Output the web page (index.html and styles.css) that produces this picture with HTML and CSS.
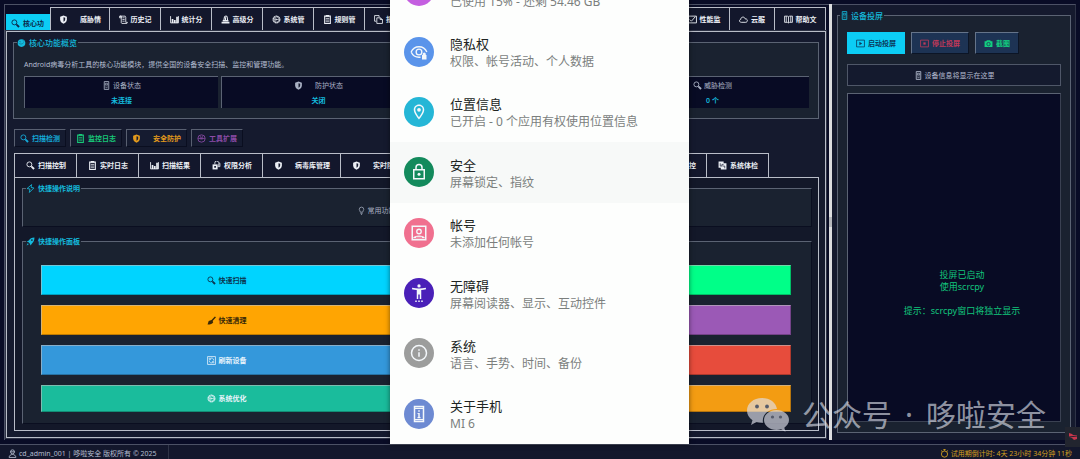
FILE: index.html
```html
<!DOCTYPE html>
<html lang="zh-CN">
<head>
<meta charset="utf-8">
<meta name="viewport" content="width=device-width, initial-scale=1">
<title>核心功能</title>
<link rel="stylesheet" href="styles.css">
</head>
<body>
<svg class="defs" aria-hidden="true">
  <symbol id="search" viewBox="0 0 16 16"><circle cx="6" cy="6" r="4.4" fill="none" stroke="currentColor" stroke-width="1.6"/><path d="M8.500 10.500l2-2 5 4.600-2.400 2.400z" fill="currentColor"/></symbol>
  <symbol id="shield" viewBox="0 0 16 16"><path d="M8 1l6 2v5c0 4-3 6-6 7.500C5 14 2 12 2 8V3z" fill="currentColor"/><path d="M8 4v8c2-1.300 3-2.500 3-4.500V5z" fill="#151a2e"/></symbol>
  <symbol id="scroll" viewBox="0 0 16 16"><path d="M4 14V3L2 2h9l1 2v9h3l-1 2H5zM1 2h3v3H1z" fill="none" stroke="currentColor" stroke-width="1.500"/><path d="M6 5h4M6 8h4M6 11h4" stroke="currentColor" stroke-width="1.400"/></symbol>
  <symbol id="chart" viewBox="0 0 16 16"><path d="M1 2v12h14V2" fill="none" stroke="currentColor" stroke-width="1.600"/><path d="M3 7h3v7H3zM7 9h3v5H7zM11 3h3v11h-3z" fill="currentColor"/></symbol>
  <symbol id="alarm" viewBox="0 0 16 16"><path d="M5 10l1-6c1-3 5-3 5 0l1 6z" fill="none" stroke="currentColor" stroke-width="1.800"/><path d="M1 12h14v3H1zM3 9h10v2H3zM7 4h2v5H7z" fill="currentColor"/></symbol>
  <symbol id="gear" viewBox="0 0 16 16"><circle cx="8" cy="8" r="6" fill="none" stroke="currentColor" stroke-width="2" stroke-dasharray="2.600 .6"/><circle cx="8" cy="8" r="4.500" fill="none" stroke="currentColor"/><path d="M4 8h8M8 8l-2-3M8 8l-2 3" stroke="currentColor" stroke-width="1.200"/></symbol>
  <symbol id="list" viewBox="0 0 16 16"><path d="M3 2h10v13H3z" fill="none" stroke="currentColor" stroke-width="2"/><path d="M5 0h6v3H5z" fill="currentColor"/><path d="M5 6h6M5 9h6M5 12h6" stroke="currentColor" stroke-width="1.400"/></symbol>
  <symbol id="copy" viewBox="0 0 16 16"><path d="M4 11H1V1h8v3M5 5h6l4 3v7H5zM11 5v3h4" fill="none" stroke="currentColor" stroke-width="1.500"/></symbol>
  <symbol id="trend" viewBox="0 0 16 16"><path d="M1 2h14v12H1z" fill="none" stroke="currentColor" stroke-width="1.600"/><path d="M3 8l3 3 7-8" fill="none" stroke="currentColor" stroke-width="1.600"/></symbol>
  <symbol id="cloud" viewBox="0 0 16 16"><path d="M4 13c-4 0-4-5-1-5 0-5 7-6 8-1 5-1 5 6 1 6z" fill="none" stroke="currentColor" stroke-width="1.600"/></symbol>
  <symbol id="book" viewBox="0 0 16 16"><path d="M1 2h5l2 1 2-1h5v11h-5l-2 1-2-1H1zM8 3v11M4 2v11M12 2v11" fill="none" stroke="currentColor" stroke-width="1.500"/></symbol>
  <symbol id="phone" viewBox="0 0 16 16"><path d="M4 1h8v14H4z" fill="none" stroke="currentColor" stroke-width="1.500"/><path d="M6 4h4v3H6zM6 9h1.500M8.500 9H10M6 12h4" fill="none" stroke="currentColor" stroke-width="1.300"/></symbol>
  <symbol id="play" viewBox="0 0 16 16"><path d="M1 2h14v12H1z" fill="none" stroke="currentColor" stroke-width="1.400"/><path d="M6 5l5 3-5 3z" fill="currentColor"/></symbol>
  <symbol id="stop" viewBox="0 0 16 16"><path d="M1 2h14v12H1z" fill="none" stroke="currentColor" stroke-width="1.400"/><path d="M6 6h4v4H6z" fill="currentColor"/></symbol>
  <symbol id="camera" viewBox="0 0 16 16"><path d="M1 4h3l1-2h6l1 2h3v10H1z" fill="currentColor"/><circle cx="8" cy="9" r="3" fill="none" stroke="#1d3354" stroke-width="1.300"/></symbol>
  <symbol id="bolt" viewBox="0 0 16 16"><path d="M10 1L2 8l5 1-1 6 8-8-5-1z" fill="none" stroke="currentColor" stroke-width="1.500"/></symbol>
  <symbol id="rocket" viewBox="0 0 16 16"><path d="M15 1c-5 0-8 2-10 5L1 8l3 1 3 3 1 3 3-4c3-2 4-6 4-10zM3 11l-2 4 4-2z" fill="currentColor"/><circle cx="10.500" cy="5.500" r="1.500" fill="#1a2230"/></symbol>
  <symbol id="bulb" viewBox="0 0 16 16"><path d="M6 11c0-2-2-3-2-5a4 4 0 018 0c0 2-2 3-2 5zM6 13h4M7 15h2" fill="none" stroke="currentColor" stroke-width="1.300"/></symbol>
  <symbol id="broom" viewBox="0 0 16 16"><path d="M14 1l2 1-6 7 1 2c-1 3-5 4-10 4l2-6 5-2z" fill="currentColor"/></symbol>
  <symbol id="refresh" viewBox="0 0 16 16"><path d="M1 1h14v14H1z" fill="none" stroke="currentColor" stroke-width="1.400"/><path d="M5 5a4 4 0 017 3M11 11a4 4 0 01-7-3M4 3v3h3M12 13v-3H9" fill="none" stroke="currentColor" stroke-width="1.300"/></symbol>
  <symbol id="user" viewBox="0 0 16 16"><circle cx="8" cy="5" r="3.500" fill="none" stroke="currentColor" stroke-width="1.500"/><path d="M2 15c0-7 12-7 12 0zM4 5h8" fill="none" stroke="currentColor" stroke-width="1.500"/></symbol>
  <symbol id="timer" viewBox="0 0 16 16"><circle cx="8" cy="9" r="5.500" fill="none" stroke="currentColor" stroke-width="1.600"/><path d="M6 1h4M8 1v2M2 3l2 1M14 3l-2 1" stroke="currentColor" stroke-width="1.600"/></symbol>
  <symbol id="globe" viewBox="0 0 16 16"><circle cx="8" cy="9" r="6.800" fill="currentColor"/><path d="M3 9c3 3 6 2 9-1M4 6l3 1M10 4l3 2" fill="none" stroke="#14708c" stroke-width="1.200"/></symbol>
  <symbol id="lockkey" viewBox="0 0 16 16"><path d="M1 6h9v9H1z" fill="currentColor"/><path d="M5 6V4a3.500 3.500 0 017-1l2 1v6h-4M12 4v5" fill="none" stroke="currentColor" stroke-width="1.500"/><path d="M4 9h3v3H4z" fill="#151a2e"/></symbol>
  <symbol id="tool" viewBox="0 0 16 16"><circle cx="8" cy="8" r="6.500" fill="none" stroke="currentColor" stroke-width="1.500"/><path d="M2 8h12M5 5h2v5M11 5H9v5" fill="none" stroke="currentColor" stroke-width="1.300"/></symbol>
  <symbol id="report" viewBox="0 0 16 16"><path d="M1 1h9v3h5v11H5v-3H1z" fill="currentColor"/><path d="M4 4v5h3V6h3M8 9h4v4" fill="none" stroke="#151a2e" stroke-width="1.200"/></symbol>
</svg>

<main class="main">
  <section class="workspace">
    <nav class="tabs">
      <button class="tab tab-active"><svg class="ico"><use href="#search"/></svg>核心功</button>
      <button class="tab tab-shield"><svg class="ico"><use href="#shield"/></svg>威胁情</button>
      <button class="tab"><svg class="ico"><use href="#scroll"/></svg>历史记</button>
      <button class="tab"><svg class="ico"><use href="#chart"/></svg>统计分</button>
      <button class="tab"><svg class="ico"><use href="#alarm"/></svg>高级分</button>
      <button class="tab"><svg class="ico"><use href="#gear"/></svg>系统管</button>
      <button class="tab"><svg class="ico"><use href="#list"/></svg>规则管</button>
      <button class="tab tab-wide"><svg class="ico"><use href="#copy"/></svg>批量</button>
      <button class="tab"><svg class="ico"><use href="#trend"/></svg>性能监</button>
      <button class="tab tab-cloud"><svg class="ico"><use href="#cloud"/></svg>云服</button>
      <button class="tab"><svg class="ico"><use href="#book"/></svg>帮助文</button>
    </nav>
    <div class="page">
      <fieldset class="group overview">
        <legend class="legend-big"><svg class="ico"><use href="#globe"/></svg>核心功能概览</legend>
        <p class="desc">Android病毒分析工具的核心功能模块，提供全国的设备安全扫描、监控和管理功能。</p>
        <div class="cards">
          <div class="card"><span class="card-name"><svg class="ico"><use href="#phone"/></svg>设备状态</span><strong>未连接</strong></div>
          <div class="card"><span class="card-name wide-gap"><svg class="ico"><use href="#shield"/></svg>防护状态</span><strong>关闭</strong></div>
          <div class="card"></div>
          <div class="card"><span class="card-name"><svg class="ico"><use href="#search"/></svg>威胁检测</span><strong>0 个</strong></div>
        </div>
      </fieldset>
      <div class="modes">
        <button class="mode cyan"><svg class="ico"><use href="#search"/></svg>扫描检测</button>
        <button class="mode green"><svg class="ico"><use href="#list"/></svg>监控日志</button>
        <button class="mode orange wide-gap"><svg class="ico"><use href="#shield"/></svg>安全防护</button>
        <button class="mode purple"><svg class="ico"><use href="#tool"/></svg>工具扩展</button>
      </div>
      <nav class="subtabs">
        <button class="subtab"><svg class="ico"><use href="#search"/></svg>扫描控制</button>
        <button class="subtab"><svg class="ico"><use href="#list"/></svg>实时日志</button>
        <button class="subtab"><svg class="ico"><use href="#chart"/></svg>扫描结果</button>
        <button class="subtab"><svg class="ico"><use href="#lockkey"/></svg>权限分析</button>
        <button class="subtab wide-gap"><svg class="ico"><use href="#shield"/></svg>病毒库管理</button>
        <button class="subtab wide-gap"><svg class="ico"><use href="#shield"/></svg>实时防护</button>
        <button class="subtab push"><svg class="ico"><use href="#chart"/></svg>监控</button>
        <button class="subtab"><svg class="ico"><use href="#report"/></svg>系统体检</button>
      </nav>
      <div class="subpage">
        <fieldset class="group intro">
          <legend><svg class="ico"><use href="#bolt"/></svg>快捷操作说明</legend>
          <p class="hint"><svg class="ico"><use href="#bulb"/></svg>常用功能</p>
        </fieldset>
        <fieldset class="group quick">
          <legend><svg class="ico"><use href="#rocket"/></svg>快捷操作面板</legend>
          <div class="actions">
            <button class="action a-cyan"><svg class="ico"><use href="#search"/></svg>快速扫描</button>
            <button class="action a-green" aria-label="操作"></button>
            <button class="action a-orange"><svg class="ico"><use href="#broom"/></svg>快速清理</button>
            <button class="action a-purple" aria-label="操作"></button>
            <button class="action a-blue"><svg class="ico"><use href="#refresh"/></svg>刷新设备</button>
            <button class="action a-red" aria-label="操作"></button>
            <button class="action a-teal"><svg class="ico"><use href="#gear"/></svg>系统优化</button>
            <button class="action a-amber" aria-label="操作"></button>
          </div>
        </fieldset>
      </div>
    </div>
  </section>
  <div class="splitter"><div class="grip"></div></div>
  <aside class="device">
    <fieldset class="group mirror">
      <legend class="legend-big"><svg class="ico"><use href="#phone"/></svg>设备投屏</legend>
      <div class="controls">
        <button class="ctl ctl-start"><svg class="ico"><use href="#play"/></svg>启动投屏</button>
        <button class="ctl ctl-stop"><svg class="ico"><use href="#stop"/></svg>停止投屏</button>
        <button class="ctl ctl-shot"><svg class="ico"><use href="#camera"/></svg>截图</button>
      </div>
      <p class="info"><svg class="ico"><use href="#phone"/></svg>设备信息将显示在这里</p>
      <div class="screen">投屏已启动<br>使用scrcpy<br><br>提示：scrcpy窗口将独立显示</div>
    </fieldset>
  </aside>
</main>

<footer class="status">
  <span class="who"><svg class="ico"><use href="#user"/></svg>cd_admin_001 | 哆啦安全 版权所有 © 2025</span>
  <span class="trial"><svg class="ico"><use href="#timer"/></svg>试用期倒计时: 4天 23小时 34分钟 11秒</span>
</footer>

<ul class="phone">
  <li class="row"><span class="badge b-storage"></span><div><h2>存储</h2><p>已使用 15% - 还剩 54.46 GB</p></div></li>
  <li class="row"><span class="badge b-privacy"><svg viewBox="0 0 24 24"><path d="M1.500 12C3.500 7.500 7.500 5 12 5s8.500 2.500 10.500 7M1.500 12c2 4.500 6 7 10.500 7h2" fill="none" stroke="currentColor" stroke-width="1.800"/><circle cx="12" cy="12" r="3.800" fill="none" stroke="currentColor" stroke-width="1.800"/><path d="M16 16h1v-1.500a2 2 0 014 0V16h1v6h-6z" fill="currentColor"/></svg></span><div><h2>隐私权</h2><p>权限、帐号活动、个人数据</p></div></li>
  <li class="row"><span class="badge b-place"><svg viewBox="0 0 24 24"><path d="M12 2C8.100 2 5 5.100 5 9c0 5.300 7 13 7 13s7-7.700 7-13c0-3.900-3.100-7-7-7zM7 9a5 5 0 0110 0c0 2.900-2.900 7.200-5 9.900C9.900 16.200 7 11.800 7 9z" fill="currentColor"/><circle cx="12" cy="9" r="2.500" fill="currentColor"/></svg></span><div><h2>位置信息</h2><p>已开启 - 0 个应用有权使用位置信息</p></div></li>
  <li class="row row-hover"><span class="badge b-lock"><svg viewBox="0 0 24 24"><path d="M5 9h14v12H5zM8 9V6a4 4 0 018 0v3" fill="none" stroke="currentColor" stroke-width="2"/><circle cx="12" cy="15" r="2" fill="currentColor"/></svg></span><div><h2>安全</h2><p>屏幕锁定、指纹</p></div></li>
  <li class="row"><span class="badge b-account"><svg viewBox="0 0 24 24"><path d="M3 3h18v18H3z" fill="none" stroke="currentColor" stroke-width="2"/><circle cx="12" cy="10" r="3" fill="none" stroke="currentColor" stroke-width="1.800"/><path d="M4 19c1-5 15-5 16 0z" fill="currentColor"/><path d="M8 17.800h8" stroke="#f0708f" stroke-width="1.200"/></svg></span><div><h2>帐号</h2><p>未添加任何帐号</p></div></li>
  <li class="row"><span class="badge b-access"><svg viewBox="0 0 24 24"><circle cx="12" cy="2.500" r="2.200" fill="currentColor"/><path d="M21 5c-6 1.300-12 1.300-18 0l-.5 2c2 .5 4.500.8 6.500 1v12h2v-6h2v6h2V8c2-.2 4.500-.5 6.500-1zM7 22h2v2H7zM11 22h2v2h-2zM15 22h2v2h-2z" fill="currentColor"/></svg></span><div><h2>无障碍</h2><p>屏幕阅读器、显示、互动控件</p></div></li>
  <li class="row"><span class="badge b-system"><svg viewBox="0 0 24 24"><circle cx="12" cy="12" r="10" fill="none" stroke="currentColor" stroke-width="2"/><path d="M11 7h2v2h-2zM11 11h2v6h-2z" fill="currentColor"/></svg></span><div><h2>系统</h2><p>语言、手势、时间、备份</p></div></li>
  <li class="row"><span class="badge b-about"><svg viewBox="0 0 24 24"><path d="M6 2h12v20H6z" fill="none" stroke="currentColor" stroke-width="2"/><path d="M6 4.500h12M6 19.500h12" stroke="currentColor" stroke-width="1.500"/><path d="M11 7h2v2h-2zM10 10.500h3V16h1v1.500h-4V16h1v-4h-1z" fill="currentColor"/></svg></span><div><h2>关于手机</h2><p>MI 6</p></div></li>
</ul>

<div class="watermark">
  <svg class="wechat" viewBox="0 0 42 34"><path d="M15 0C6.500 0 0 5.500 0 12.500c0 4 2 7.500 5.500 9.700L4 27l5.500-3c2 .6 4 .9 6.500.8C14.500 17 21 11 30 11 29 4.500 23 0 15 0z" fill="currentColor"/><path d="M29.500 12C22.500 12 17 16.500 17 22s5.500 10 12.500 10c1.500 0 3-.2 4.500-.7l4.500 2.400-1.200-4C40 27.800 42 25 42 22c0-5.500-5.500-10-12.500-10z" fill="currentColor"/><g fill="#555b6b"><circle cx="10" cy="8.500" r="1.900"/><circle cx="20" cy="8.500" r="1.900"/><circle cx="25.500" cy="19" r="1.600"/><circle cx="33.500" cy="19" r="1.600"/></g></svg>
  <span>公众号</span><span>·</span><span>哆啦安全</span>
</div>
<div class="corner"><svg viewBox="0 0 15 18"><path d="M4 6l3 1 1 1 4 0v4l-3 1-2-2-3-1z" fill="#c8364c"/><path d="M4 10l8-1" stroke="#22252f"/></svg></div>
</body>
</html>
```

FILE: styles.css
```css
* { box-sizing: border-box; }

body {
  margin: 0;
  height: 100vh;
  min-height: 440px;
  position: relative;
  overflow: hidden;
  display: flex;
  flex-direction: column;
  background: #090c26;
  color: #d5dae6;
  font: 7px/11px "Noto Sans", "Noto Sans CJK SC", sans-serif;
}

button {
  font: inherit;
  color: inherit;
  margin: 0;
  padding: 0;
  border-radius: 0;
  white-space: nowrap;
}

p, h2, ul { margin: 0; padding: 0; }

.defs { position: absolute; width: 0; height: 0; }
.ico { width: 9px; height: 9px; flex: none; }

.main {
  flex: 1;
  min-height: 0;
  display: flex;
  padding: 4px;
}

.workspace {
  flex: 1;
  min-width: 0;
  display: flex;
  flex-direction: column;
  padding: 2px 3px 2px 1px;
  border-top: 1px solid #4c5165;
  border-left: 1px solid #4c5165;
}

.tabs { display: flex; align-items: stretch; height: 24px; }

.tab {
  width: 51px;
  display: flex;
  align-items: center;
  justify-content: center;
  gap: 3px;
  background: #13172c;
  border: 0 solid #b9bdc8;
  border-top-width: 1px;
  border-right-width: 1px;
  color: #eceff5;
  font-weight: 600;
}
.tab-active {
  width: 44px;
  height: 17px;
  align-self: flex-end;
  background: #0ccdf5;
  border-color: #0ccdf5;
  color: #0b2a4c;
}
.tab-shield { width: 60px; gap: 12px; border-left-width: 1px; }
.tab-cloud { width: 45px; }
.tab-wide { flex: 1; justify-content: flex-start; padding-left: 9px; }

.page {
  flex: 1;
  min-height: 0;
  display: flex;
  flex-direction: column;
  padding: 5px 6px 6px;
  background: #151a2e;
  border: 1px solid #b9bdc8;
  outline: 1px solid #2e3346;
}

.group {
  margin: 0;
  min-width: 0;
  border: 1px solid #5b6373;
  background: #1a2230;
}
legend {
  display: flex;
  align-items: center;
  gap: 3px;
  padding: 0 1px 0 0;
  height: 11px;
  color: #14b9dc;
  font-weight: 600;
}
.legend-big { font-size: 8px; font-weight: 500; }

.overview { padding: 11px 9px 10px 10px; }
.overview legend { margin-left: -7px; }
.desc { margin-bottom: 6px; color: #b4bdd0; }
.cards { display: grid; grid-template-columns: repeat(4, 1fr); gap: 3px; }
.card {
  height: 32px;
  display: flex;
  flex-direction: column;
  align-items: center;
  justify-content: center;
  gap: 4px;
  background: #080b24;
  border-top: 1px solid #5b6373;
  border-left: 1px solid #5b6373;
  color: #aab2c4;
}
.card-name { display: flex; align-items: center; gap: 2px; }
.card strong { color: #14b9dc; font-weight: 600; }
.card-name.wide-gap, .mode.wide-gap, .subtab.wide-gap { gap: 12px; }

.modes { display: flex; gap: 4px; margin: 10px 0 6px 1px; }
.mode {
  height: 18px;
  padding: 0 5px;
  display: flex;
  align-items: center;
  gap: 3px;
  background: #151b30;
  border: 1px solid #0a0e20;
  border-top-color: #596071;
  border-left-color: #596071;
  font-weight: 600;
}
.cyan { color: #14a9d8; }
.green { color: #18c878; }
.orange { color: #e39a1c; }
.purple { color: #8c4ba8; }

.subtabs {
  display: flex;
  height: 24px;
  margin: 0 50px 0 1px;
  border-left: 1px solid #b9bdc8;
}
.subtab {
  display: flex;
  align-items: center;
  gap: 3px;
  padding: 0 10px 0 11px;
  background: #13172c;
  border: 0 solid #b9bdc8;
  border-top-width: 1px;
  border-right-width: 1px;
  color: #eceff5;
  font-weight: 600;
}
.push { margin-left: auto; }

.subpage {
  flex: 1;
  min-height: 0;
  margin-left: 1px;
  display: flex;
  flex-direction: column;
  gap: 9px;
  padding: 5px 6px 6px 7px;
  background: #131829;
  border: 1px solid #b9bdc8;
}
.intro { padding: 0; border-right-color: #0a0e20; border-bottom-color: #0a0e20; }
.intro legend { margin-left: 3px; }
.hint {
  height: 32px;
  display: flex;
  align-items: center;
  justify-content: center;
  gap: 2px;
  padding-right: 82px;
  color: #aab2c4;
}
.quick {
  flex: 1;
  min-height: 0;
  padding: 18px 20px 11px 18px;
  border-right-color: #0a0e20;
  border-bottom-color: #0a0e20;
}
.quick legend { margin-left: -15px; }
.actions {
  height: 100%;
  display: grid;
  grid-template-columns: 1fr 1fr;
  grid-template-rows: repeat(3, 30fr) 27fr;
  gap: 10px 8px;
}
.action {
  display: flex;
  align-items: center;
  justify-content: center;
  gap: 3px;
  border: 1px solid rgba(0, 0, 0, .25);
  border-top-color: rgba(190, 190, 190, .6);
  border-left-color: rgba(190, 190, 190, .6);
  color: #e8f4fb;
  font-weight: 600;
}
.a-cyan { background: #00d4ff; color: #0b3550; }
.a-green { background: #00ff88; }
.a-orange { background: #ffa502; color: #3a2908; }
.a-purple { background: #9b59b6; }
.a-blue { background: #3498db; }
.a-red { background: #e74c3c; }
.a-teal { background: #1abc9c; }
.a-amber { background: #f39c12; }

.splitter {
  width: 3px;
  display: flex;
  flex-direction: column;
  justify-content: center;
  background: #dcdddf;
}
.grip { height: 10px; background: #b6b8bc; }

.device {
  flex: none;
  width: 244px;
  display: flex;
  padding: 5px 4px 7px 5px;
  border-top: 1px solid #4c5165;
  border-right: 1px solid #2e3346;
  background: #151a2e;
}
.mirror {
  flex: 1;
  display: flex;
  flex-direction: column;
  padding: 11px 9px 10px;
}
.mirror legend { margin-left: -7px; gap: 2px; }
.controls { display: flex; gap: 6px; }
.ctl {
  height: 22px;
  padding: 0 8px;
  display: flex;
  align-items: center;
  gap: 3px;
  background: #1d3354;
  border: 1px solid #0c1526;
  border-top-color: #65748a;
  border-left-color: #65748a;
  font-weight: 600;
}
.ctl-start { background: #0ccdf5; color: #0b3a5c; border-color: #0ccdf5; }
.ctl-stop { color: #c0395a; }
.ctl-shot { color: #12cf80; }
.info {
  height: 22px;
  margin: 10px 0 7px;
  display: flex;
  align-items: center;
  justify-content: center;
  gap: 2px;
  background: #141a2e;
  border: 1px solid #4f5768;
  color: #b4bdd0;
}
.screen {
  flex: 1;
  align-content: center;
  padding: 70px 0 0 16px;
  text-align: center;
  background: #080b24;
  border: 1px solid #3a4152;
  border-top-color: #5b6373;
  border-left-color: #5b6373;
  color: #12c47c;
  font-size: 9px;
  line-height: 12px;
}

.status {
  height: 15px;
  display: flex;
  align-items: center;
  justify-content: space-between;
  padding: 0 8px;
  background: #13172c;
  border-top: 1px solid #4c5165;
}
.who, .trial { display: flex; align-items: center; gap: 2px; height: 14px; padding-top: 2px; }
.who { padding-right: 11px; border-right: 1px solid #2e3346; color: #b4bdd0; }
.trial { color: #d3a01f; }

.phone {
  position: absolute;
  top: -39px;
  bottom: 15px;
  left: 50%;
  width: 299px;
  margin-left: -150px;
  display: flex;
  flex-direction: column;
  background: #fdfefd;
  box-shadow: 0 0 5px rgba(0, 0, 0, .5);
  list-style: none;
}
.row {
  flex: 1;
  display: flex;
  align-items: center;
  gap: 16px;
  padding-left: 14px;
}
.row-hover { background: #f7f9f8; }
.row div { padding-top: 2px; }
.row h2 { color: #202422; font-size: 13px; line-height: 18px; font-weight: 400; }
.row p { color: #7b7f7d; font-size: 12px; line-height: 17px; }
.badge {
  width: 30px;
  height: 30px;
  display: grid;
  place-items: center;
  border-radius: 50%;
  color: #f4f8fb;
}
.badge svg { width: 18px; height: 18px; }
.b-storage { background: #c45fe0; }
.b-privacy { background: #5a94ea; }
.b-place { background: #25b6d6; }
.b-lock { background: #138a5c; }
.b-account { background: #f0708f; }
.b-access { background: #4a20b8; }
.b-system { background: #9c9d9c; }
.b-about { background: #6d8ad2; }

.watermark {
  position: absolute;
  right: 34px;
  bottom: 26px;
  display: flex;
  align-items: center;
  gap: 13px;
  color: rgba(222, 225, 235, .65);
  font-size: 30px;
  line-height: 36px;
  font-weight: 400;
}
.wechat { width: 42px; height: 34px; }

.corner {
  position: absolute;
  right: 0;
  bottom: 12px;
  width: 15px;
  height: 20px;
  background: #22252f;
}
.corner svg { width: 15px; height: 18px; }
```
